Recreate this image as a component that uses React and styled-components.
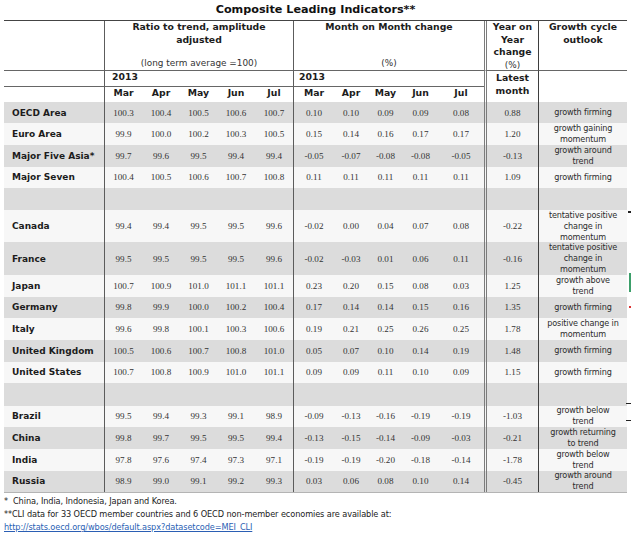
import React from "react";
import styled, { createGlobalStyle } from "styled-components";

const sans = `"DejaVu Sans", Verdana, sans-serif`;
const serif = `"Liberation Serif", "Times New Roman", serif`;

const GlobalStyle = createGlobalStyle`
  body {
    margin: 0;
    background: #fff;
  }
`;

const Page = styled.div`
  position: relative;
  width: 631px;
  height: 537px;
  overflow: hidden;
  padding-left: 4px;
  box-sizing: border-box;
  font-family: ${sans};
  color: #222;
`;

const Title = styled.div`
  width: 623px;
  height: 20px;
  text-align: center;
  font-weight: bold;
  font-size: 11.2px;
  line-height: 20px;
  color: #111;
`;

const Grid = styled.div`
  display: grid;
  width: 623px;
  grid-template-columns: 100px 38px 38px 37px 38px 38px 41px 34px 35px 35px 46px 54px 89px;
  grid-template-rows:
    50px 16px 14.7px repeat(5, 21.66px) 32.5px 32.5px
    repeat(5, 21.66px) 22.3px repeat(4, 21.66px);
  border-top: 1px solid #444;
  border-bottom: 1px solid #b4b4b4;
`;

const edges = {
  thin: "1px solid #5c5c5c",
  dark: "1px solid #3e3e3e",
  double: "3px double #7c7c7c",
};

const Cell = styled.div`
  box-sizing: border-box;
  min-width: 0;
  display: flex;
  align-items: center;
  justify-content: center;
  background: ${(p) => p.$bg || "transparent"};
  border-left: ${(p) => (p.$edge ? edges[p.$edge] : "none")};
  font-family: ${serif};
  font-size: 9.1px;
  color: #333;
`;

const Label = styled(Cell)`
  justify-content: flex-start;
  padding-left: 8px;
  font-family: ${sans};
  font-weight: bold;
  font-size: 9px;
  color: #1c1c1c;
  white-space: nowrap;
`;

const Outlook = styled(Cell)`
  font-family: ${sans};
  font-size: 8.1px;
  line-height: 11px;
  letter-spacing: -0.15px;
  text-align: center;
  white-space: pre-line;
  color: #2c2c2c;
`;

const HeadCell = styled.div`
  box-sizing: border-box;
  grid-column: ${(p) => p.$col};
  grid-row: ${(p) => p.$row};
  display: flex;
  flex-direction: column;
  align-items: ${(p) => (p.$left ? "flex-start" : "center")};
  justify-content: ${(p) => (p.$spread ? "space-between" : "flex-start")};
  padding: ${(p) => p.$pad || "0"};
  border-left: ${(p) => (p.$edge ? edges[p.$edge] : "none")};
  border-bottom: ${(p) => (p.$rule ? "1px solid #666" : "none")};
  font-family: ${sans};
  font-size: 9.3px;
  line-height: 12.5px;
  text-align: center;
  color: #1c1c1c;
`;

const Strong = styled.span`
  font-weight: bold;
`;

const Note = styled.span`
  font-size: 8.9px;
  color: #333;
`;

const Foot = styled.div`
  padding-top: 2px;
  font-size: 8.2px;
  line-height: 13px;
  letter-spacing: -0.1px;
  color: #222;
`;

const Link = styled.a`
  color: #2b5fb4;
  text-decoration: underline;
`;

const Mark = styled.span`
  position: absolute;
  left: ${(p) => p.$x}px;
  top: ${(p) => p.$y}px;
  width: ${(p) => p.$w}px;
  height: ${(p) => p.$h}px;
  background: ${(p) => p.$c};
`;

const GREY = "#dcdcdc";
const LIGHT = "#f7f7f7";

const months = ["Mar", "Apr", "May", "Jun", "Jul"];

const rows = [
  { name: "OECD Area", r: ["100.3", "100.4", "100.5", "100.6", "100.7"], m: ["0.10", "0.10", "0.09", "0.09", "0.08"], y: "0.88", o: "growth firming" },
  { name: "Euro Area", r: ["99.9", "100.0", "100.2", "100.3", "100.5"], m: ["0.15", "0.14", "0.16", "0.17", "0.17"], y: "1.20", o: "growth gaining\nmomentum" },
  { name: "Major Five Asia*", r: ["99.7", "99.6", "99.5", "99.4", "99.4"], m: ["-0.05", "-0.07", "-0.08", "-0.08", "-0.05"], y: "-0.13", o: "growth around\ntrend" },
  { name: "Major Seven", r: ["100.4", "100.5", "100.6", "100.7", "100.8"], m: ["0.11", "0.11", "0.11", "0.11", "0.11"], y: "1.09", o: "growth firming" },
  null,
  { name: "Canada", r: ["99.4", "99.4", "99.5", "99.5", "99.6"], m: ["-0.02", "0.00", "0.04", "0.07", "0.08"], y: "-0.22", o: "tentative positive\nchange in\nmomentum" },
  { name: "France", r: ["99.5", "99.5", "99.5", "99.5", "99.6"], m: ["-0.02", "-0.03", "0.01", "0.06", "0.11"], y: "-0.16", o: "tentative positive\nchange in\nmomentum" },
  { name: "Japan", r: ["100.7", "100.9", "101.0", "101.1", "101.1"], m: ["0.23", "0.20", "0.15", "0.08", "0.03"], y: "1.25", o: "growth above\ntrend" },
  { name: "Germany", r: ["99.8", "99.9", "100.0", "100.2", "100.4"], m: ["0.17", "0.14", "0.14", "0.15", "0.16"], y: "1.35", o: "growth firming" },
  { name: "Italy", r: ["99.6", "99.8", "100.1", "100.3", "100.6"], m: ["0.19", "0.21", "0.25", "0.26", "0.25"], y: "1.78", o: "positive change in\nmomentum" },
  { name: "United Kingdom", r: ["100.5", "100.6", "100.7", "100.8", "101.0"], m: ["0.05", "0.07", "0.10", "0.14", "0.19"], y: "1.48", o: "growth firming" },
  { name: "United States", r: ["100.7", "100.8", "100.9", "101.0", "101.1"], m: ["0.09", "0.09", "0.11", "0.10", "0.09"], y: "1.15", o: "growth firming" },
  null,
  { name: "Brazil", r: ["99.5", "99.4", "99.3", "99.1", "98.9"], m: ["-0.09", "-0.13", "-0.16", "-0.19", "-0.19"], y: "-1.03", o: "growth below\ntrend" },
  { name: "China", r: ["99.8", "99.7", "99.5", "99.5", "99.4"], m: ["-0.13", "-0.15", "-0.14", "-0.09", "-0.03"], y: "-0.21", o: "growth returning\nto trend" },
  { name: "India", r: ["97.8", "97.6", "97.4", "97.3", "97.1"], m: ["-0.19", "-0.19", "-0.20", "-0.18", "-0.14"], y: "-1.78", o: "growth below\ntrend" },
  { name: "Russia", r: ["98.9", "99.0", "99.1", "99.2", "99.3"], m: ["0.03", "0.06", "0.08", "0.10", "0.14"], y: "-0.45", o: "growth around\ntrend" },
];

const DataRow = ({ row, bg }) => {
  const r = row ? row.r : ["", "", "", "", ""];
  const m = row ? row.m : ["", "", "", "", ""];
  return (
    <>
      <Label $bg={bg}>{row && row.name}</Label>
      {r.map((v, i) => (
        <Cell key={"r" + i} $bg={bg} $edge={i === 0 ? "thin" : null}>{v}</Cell>
      ))}
      {m.map((v, i) => (
        <Cell key={"m" + i} $bg={bg} $edge={i === 0 ? "thin" : null}>{v}</Cell>
      ))}
      <Cell $bg={bg} $edge="double">{row && row.y}</Cell>
      <Outlook $bg={bg} $edge="dark">{row && row.o}</Outlook>
    </>
  );
};

const App = () => {
  return (
    <Page>
      <GlobalStyle />
      <Title>Composite Leading Indicators**</Title>
      <Grid>
        <HeadCell $col="1" $row="1" $rule />
        <HeadCell $col="2 / 7" $row="1" $edge="thin" $rule $spread $pad="0 0 1px">
          <Strong>Ratio to trend, amplitude<br />adjusted</Strong>
          <Note>(long term average =100)</Note>
        </HeadCell>
        <HeadCell $col="7 / 12" $row="1" $edge="thin" $rule $spread $pad="0 0 1px">
          <Strong>Month on Month change</Strong>
          <Note>(%)</Note>
        </HeadCell>
        <HeadCell $col="12" $row="1" $edge="double" $rule>
          <Strong>Year on<br />Year<br />change</Strong>
          <Note>(%)</Note>
        </HeadCell>
        <HeadCell $col="13" $row="1" $edge="dark" $rule>
          <Strong>Growth cycle<br />outlook</Strong>
        </HeadCell>

        <HeadCell $col="1" $row="2" $rule />
        <HeadCell $col="2 / 7" $row="2" $edge="thin" $rule $left $pad="0 0 0 7px">
          <Strong>2013</Strong>
        </HeadCell>
        <HeadCell $col="7 / 12" $row="2" $edge="thin" $rule $left $pad="0 0 0 5px">
          <Strong>2013</Strong>
        </HeadCell>
        <HeadCell $col="12" $row="2 / 4" $edge="double" $pad="1px 0 0">
          <Strong>Latest<br />month</Strong>
        </HeadCell>
        <HeadCell $col="13" $row="2 / 4" $edge="dark" />

        <HeadCell $col="1" $row="3" />
        {[...months, ...months].map((mo, i) => (
          <HeadCell
            key={i}
            $col={String(i + 2)}
            $row="3"
            $edge={i === 0 || i === 5 ? "thin" : null}
          >
            <Strong>{mo}</Strong>
          </HeadCell>
        ))}

        {rows.map((row, i) => (
          <DataRow key={i} row={row} bg={i % 2 === 0 ? GREY : LIGHT} />
        ))}
      </Grid>
      <Foot>
        *&nbsp; China, India, Indonesia, Japan and Korea.
        <br />
        **CLI data for 33 OECD member countries and 6 OECD non-member economies are available at:
        <br />
        <Link href="#">http://stats.oecd.org/wbos/default.aspx?datasetcode=MEI_CLI</Link>
      </Foot>
      <Mark $x={628} $y={211} $w={3} $h={2} $c="#222" />
      <Mark $x={629} $y={273} $w={2} $h={19} $c="#3c9f6a" />
      <Mark $x={629} $y={306} $w={2} $h={2} $c="#d33" />
      <Mark $x={626} $y={403} $w={5} $h={1} $c="#222" />
      <Mark $x={626} $y={420} $w={5} $h={1} $c="#222" />
    </Page>
  );
};

export default App;
